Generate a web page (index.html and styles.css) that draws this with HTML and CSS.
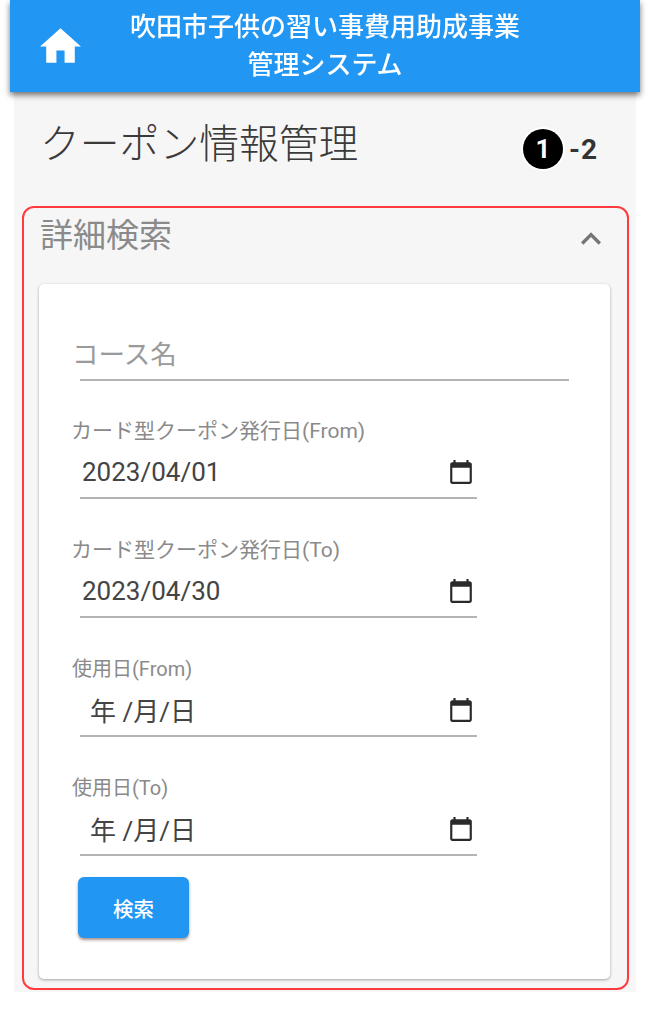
FILE: index.html
```html
<!DOCTYPE html>
<html lang="ja">
<head>
<meta charset="utf-8">
<title>クーポン情報管理</title>
<link rel="stylesheet" href="styles.css">
</head>
<body>
<div class="page">
  <header class="app-bar">
    <svg class="home-icon" viewBox="0 0 24 24"><path d="M10 20v-6h4v6h5v-8h3L12 3 2 12h3v8z"/></svg>
    <div class="app-title">吹田市子供の習い事費用助成事業<br>管理システム</div>
  </header>
  <main class="content">
    <div class="heading-row">
      <h1 class="page-title">クーポン情報管理</h1>
      <div class="step"><span class="step-circle">1</span><span class="step-sub">-2</span></div>
    </div>
    <section class="panel">
      <div class="panel-head">
        <span class="panel-title">詳細検索</span>
        <svg class="chevron" viewBox="0 0 24 24"><path d="M12 8l-6 6 1.41 1.41L12 10.83l4.59 4.58L18 14z"/></svg>
      </div>
      <div class="card">
        <div class="field-text"><span class="placeholder">コース名</span></div>
        <div class="field">
          <div class="label">カード型クーポン発行日(From)</div>
          <div class="date-input"><span class="date-value">2023/04/01</span>
            <svg class="cal" viewBox="0 0 24 24"><path d="M20 3h-1V1h-2v2H7V1H5v2H4c-1.1 0-2 .9-2 2v16c0 1.1.9 2 2 2h16c1.1 0 2-.9 2-2V5c0-1.1-.9-2-2-2zm0 18H4V8h16v13z"/></svg>
          </div>
        </div>
        <div class="field">
          <div class="label">カード型クーポン発行日(To)</div>
          <div class="date-input"><span class="date-value">2023/04/30</span>
            <svg class="cal" viewBox="0 0 24 24"><path d="M20 3h-1V1h-2v2H7V1H5v2H4c-1.1 0-2 .9-2 2v16c0 1.1.9 2 2 2h16c1.1 0 2-.9 2-2V5c0-1.1-.9-2-2-2zm0 18H4V8h16v13z"/></svg>
          </div>
        </div>
        <div class="field">
          <div class="label label-small">使用日(From)</div>
          <div class="date-input"><span class="date-value date-empty">年 /月/日</span>
            <svg class="cal" viewBox="0 0 24 24"><path d="M20 3h-1V1h-2v2H7V1H5v2H4c-1.1 0-2 .9-2 2v16c0 1.1.9 2 2 2h16c1.1 0 2-.9 2-2V5c0-1.1-.9-2-2-2zm0 18H4V8h16v13z"/></svg>
          </div>
        </div>
        <div class="field field-last">
          <div class="label label-small">使用日(To)</div>
          <div class="date-input"><span class="date-value date-empty">年 /月/日</span>
            <svg class="cal" viewBox="0 0 24 24"><path d="M20 3h-1V1h-2v2H7V1H5v2H4c-1.1 0-2 .9-2 2v16c0 1.1.9 2 2 2h16c1.1 0 2-.9 2-2V5c0-1.1-.9-2-2-2zm0 18H4V8h16v13z"/></svg>
          </div>
        </div>
        <button class="search-btn" type="button">検索</button>
      </div>
    </section>
  </main>
</div>
</body>
</html>
```
FILE: styles.css
```css
* { box-sizing: border-box; }
html, body { margin: 0; padding: 0; background: #fff; }
body {
  font-family: Roboto, "Noto Sans CJK JP", sans-serif;
  height: 1024px;
  overflow: hidden;
}
.page { filter: blur(0.45px); }
.app-bar {
  position: relative;
  z-index: 2;
  margin: 0 8px 0 10px;
  height: 92px;
  background: #2196f3;
  box-shadow: 0 3px 6px rgba(0, 0, 0, 0.55);
  display: grid;
  grid-template-columns: 1fr auto 1fr;
  align-items: center;
  padding-left: 26px;
  padding-right: 26px;
}
.home-icon { width: 49px; height: 49px; fill: #fff; }
.app-title {
  grid-column: 2;
  color: #fff;
  font-size: 26px;
  font-weight: 500;
  line-height: 38px;
  text-align: center;
  margin-top: -1px;
}
.content {
  margin: 0 12px 0 14px;
  background: #f6f6f6;
  padding-bottom: 2px;
}
.heading-row {
  height: 114px;
  padding: 0 38px 0 26px;
  display: flex;
  align-items: center;
  justify-content: space-between;
}
.page-title {
  margin: 0 0 9px;
  font-size: 39.8px;
  font-weight: 300;
  line-height: 50px;
  color: #3a3a3a;
}
.step { display: flex; align-items: center; gap: 6px; margin-bottom: 0; }
.step-circle {
  width: 40px;
  height: 40px;
  border-radius: 50%;
  background: #000;
  color: #fff;
  font-size: 26px;
  font-weight: 700;
  line-height: 40px;
  text-align: center;
  box-shadow: 0 0 0 2px #fff;
}
.step-sub { font-size: 28px; font-weight: 700; color: #333; letter-spacing: 1px; }
.panel {
  margin: 0 7px 0 8px;
  border: 2px solid #ff3b3f;
  border-radius: 12px;
}
.panel-head {
  height: 76px;
  padding: 0 16px 0 16px;
  display: flex;
  align-items: center;
  justify-content: space-between;
}
.panel-title {
  font-size: 33px;
  color: #8a8a8a;
  line-height: 40px;
  margin-bottom: 20px;
}
.chevron { width: 40px; height: 40px; fill: #757575; margin-bottom: 15px; }
.card {
  margin: 0 17px 9px 15px;
  background: #fff;
  border-radius: 5px;
  box-shadow: 0 1px 3px rgba(0, 0, 0, 0.35);
  padding: 42px 41px 41px 32px;
  height: 695px;
}
.field-text {
  height: 55px;
  margin: 0 0 35px;
  display: flex;
  align-items: center;
  position: relative;
  border-bottom: 2px solid #b4b4b4;
  margin-left: 9px;
}
.placeholder { font-size: 26.5px; color: #9a9a9a; margin-left: -8px; }
.field { margin-bottom: 36px; }
.field-last { margin-bottom: 21px; }
.label { font-size: 21px; line-height: 30px; color: #8a8a8a; }
.label-small { font-size: 20px; margin-left: 1px; }
.date-input {
  width: 397px;
  height: 53px;
  margin-left: 9px;
  border-bottom: 2px solid #b4b4b4;
  display: flex;
  align-items: center;
  justify-content: space-between;
  padding: 0 3px 0 2px;
}
.date-value { font-size: 26px; color: #444; }
.date-empty { padding-left: 8px; }
.cal { width: 26px; height: 26px; fill: #2a2a2a; }
.search-btn {
  display: block;
  width: 111px;
  height: 61px;
  margin-left: 7px;
  border: 0;
  border-radius: 6px;
  background: #2196f3;
  color: #fff;
  font-family: inherit;
  font-size: 20.5px;
  font-weight: 500;
  box-shadow: 0 2px 3px rgba(80, 40, 30, 0.5);
}
```
